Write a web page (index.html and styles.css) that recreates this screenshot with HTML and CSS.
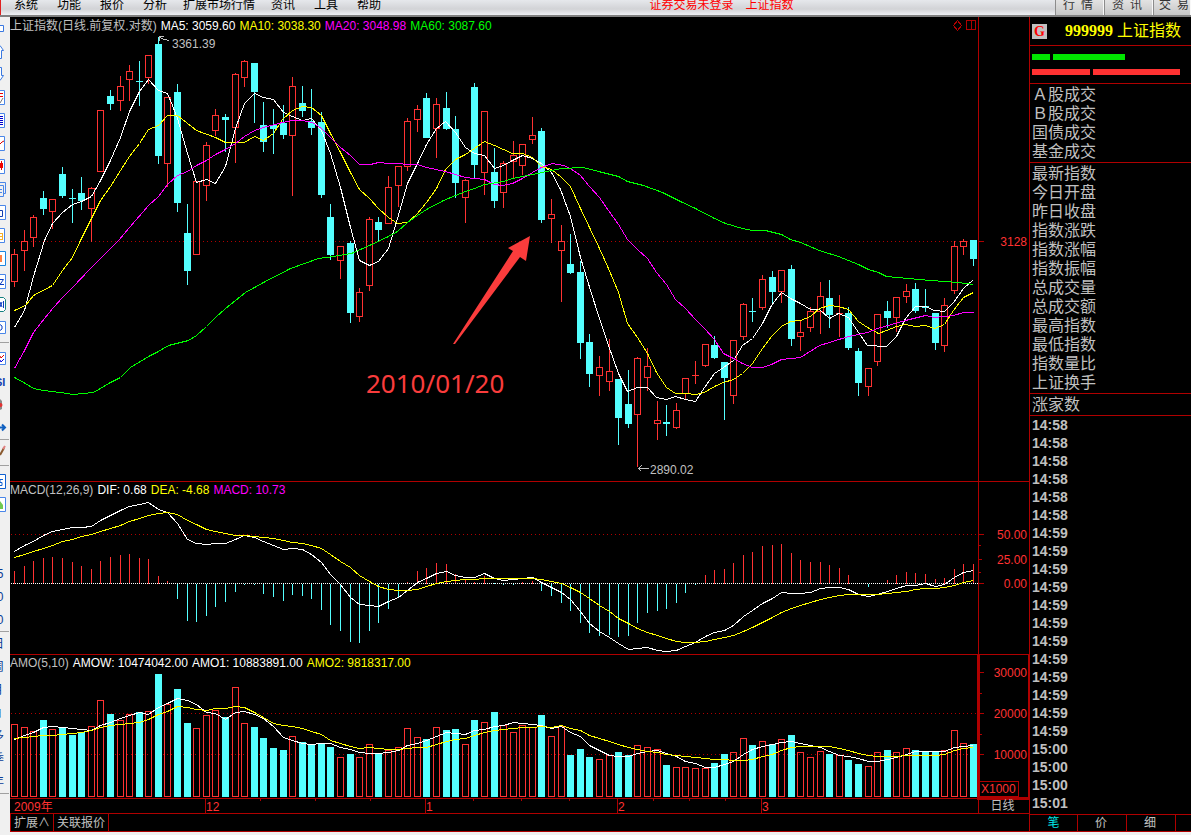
FILE: index.html
```html
<!DOCTYPE html>
<html lang="zh-CN">
<head>
<meta charset="utf-8">
<title>上证指数</title>
<link rel="stylesheet" href="styles.css">
</head>
<body>
<header class="menubar">
  <nav class="menu">
    <button>系统</button><button>功能</button><button>报价</button><button>分析</button><button class="long">扩展市场行情</button><button>资讯</button><button>工具</button><button>帮助</button>
  </nav>
  <div class="status"><span>证券交易未登录</span><span>上证指数</span></div>
  <nav class="modes"><button>行&ensp;情</button><button>资&ensp;讯</button><button>交&ensp;易</button></nav>
</header>
<main class="workspace">
  <nav class="tools" id="tools" aria-label="工具栏"></nav>
  <section class="chart">
    <div class="pane">
      <svg id="price" class="plot" viewBox="10 17 968 464" preserveAspectRatio="none"></svg>
      <p class="legend main"><span>上证指数(日线.前复权.对数)</span><span class="w">MA5: 3059.60</span><span class="y">MA10: 3038.30</span><span class="m">MA20: 3048.98</span><span class="g">MA60: 3087.60</span></p>
    </div>
    <div class="scale" id="scale-price"></div>
    <div class="pane">
      <svg id="macd" class="plot" viewBox="10 482 968 172" preserveAspectRatio="none"></svg>
      <p class="legend"><span>MACD(12,26,9)</span><span class="w">DIF: 0.68</span><span class="y">DEA: -4.68</span><span class="m">MACD: 10.73</span></p>
    </div>
    <div class="scale" id="scale-macd"></div>
    <div class="pane">
      <svg id="amo" class="plot" viewBox="10 655 968 143" preserveAspectRatio="none"></svg>
      <p class="legend"><span>AMO(5,10)</span><span class="w">AMOW: 10474042.00</span><span class="w">AMO1: 10883891.00</span><span class="y">AMO2: 9818317.00</span></p>
    </div>
    <div class="scale active" id="scale-amo"><span class="unit">X1000</span></div>
    <div class="pane dates"><svg id="dates" class="plot" viewBox="10 799 968 14" preserveAspectRatio="none"></svg></div>
    <div class="scale period">日线</div>
    <div class="subtabs"><button>扩展∧</button><button>关联报价</button></div>
  </section>
  <aside class="quote">
    <h1 class="symbol"><span class="badge">G</span><span class="code">999999</span><span>上证指数</span></h1>
    <div class="strength">
      <div class="bars up"><i style="width:18px"></i><i style="width:72px"></i></div>
      <div class="bars down"><i style="width:58px"></i><i style="width:87px"></i></div>
    </div>
    <ul class="fields"><li>Ａ股成交</li><li>Ｂ股成交</li><li>国债成交</li><li>基金成交</li></ul>
    <ul class="fields"><li>最新指数</li><li>今日开盘</li><li>昨日收盘</li><li>指数涨跌</li><li>指数涨幅</li><li>指数振幅</li><li>总成交量</li><li>总成交额</li><li>最高指数</li><li>最低指数</li><li>指数量比</li><li>上证换手</li></ul>
    <ul class="fields"><li>涨家数</li></ul>
    <ol class="ticks"><li>14:58</li><li>14:58</li><li>14:58</li><li>14:58</li><li>14:58</li><li>14:58</li><li>14:59</li><li>14:59</li><li>14:59</li><li>14:59</li><li>14:59</li><li>14:59</li><li>14:59</li><li>14:59</li><li>14:59</li><li>14:59</li><li>14:59</li><li>14:59</li><li>15:00</li><li>15:00</li><li>15:00</li><li>15:01</li></ol>
    <div class="tabs"><button class="on">笔</button><button>价</button><button>细</button></div>
  </aside>
</main>
<footer class="edge"></footer>
<script src="chart.js"></script>
</body>
</html>
```
FILE: styles.css
```css
* { box-sizing: border-box; }
:root {
  --line: #b00000;
  --red: #ff3232;
  --cyan: #54ffff;
  --grey: #c0c0c0;
}
body {
  margin: 0;
  height: 100vh;
  display: flex;
  flex-direction: column;
  overflow: hidden;
  background: #000;
  color: var(--grey);
  font: 12px/14px "Liberation Sans", "Noto Sans CJK SC", sans-serif;
}
button {
  margin: 0;
  padding: 0;
  border: 0;
  background: none;
  color: inherit;
  font: inherit;
}
ul, ol, p, h1 { margin: 0; padding: 0; list-style: none; }

.menubar {
  flex: none;
  height: 17px;
  display: grid;
  grid-template-columns: 1fr auto 1fr;
  overflow: hidden;
  background: linear-gradient(#e6e8ec, #d2d3d6 60%, #eef0f4);
  border-bottom: 2px solid #808080;
  color: #000;
  line-height: 10px;
}
.menu {
  display: flex;
  align-items: flex-start;
  gap: 19px;
  padding-left: 13px;
  border-left: 1px solid #e02020;
  white-space: nowrap;
}
.menu .long { margin: 0 -3px; }
.status { display: flex; gap: 12px; color: #f00; padding-left: 252px; }
.modes { display: flex; justify-content: flex-end; overflow: hidden; min-width: 136px; }
.modes button {
  flex: none;
  width: 49px;
  height: 15px;
  padding: 0 3px 5px 0;
  background: linear-gradient(#e2e2e2, #c6c6c6);
  border-left: 1px solid #8c8c8c;
  border-right: 1px solid #f8f8f8;
  color: #333;
}
.modes button:last-child { width: 38px; padding: 0 0 5px 4px; white-space: nowrap; }

.workspace { flex: 1; min-height: 0; display: flex; }
.tools {
  flex: none;
  width: 10px;
  overflow: hidden;
  display: flex;
  flex-direction: column;
  background: #f0f0f0;
}
.tools button { flex: none; height: 23px; width: 10px; text-align: left; }
.tools svg { display: block; width: 10px; height: 23px; }
.tools hr { flex: none; width: 9px; margin: 0; border: 0; border-top: 1px solid #a0a0a0; }
.tools .wide { margin: 3px 0 4px; }
.tools .tight { margin: 2px 0 4px; }
.tools .gap { flex: none; height: 46px; }

.chart {
  flex: 1;
  min-width: 0;
  display: grid;
  grid-template-columns: 1fr 51px;
  grid-template-rows: 465fr 173fr 144fr 15px 18px;
}
.pane, .scale { position: relative; min-height: 0; min-width: 0; border-bottom: 1px solid var(--line); }
.scale { border-left: 1px solid var(--line); color: var(--red); }
.plot { position: absolute; inset: 0; width: 100%; height: 100%; shape-rendering: crispEdges; fill: none; }
.plot text { fill: var(--grey); font-size: 12px; }
.plot .note { fill: #fa3c3c; font: 26px "Noto Sans", sans-serif; }
.plot .month { fill: var(--red); }
.legend { position: relative; display: flex; gap: 4px; padding-top: 1px; white-space: nowrap; }
.legend.main { padding-top: 2px; }
.w { color: #fff; }
.y { color: #ff0; }
.m { color: #f0f; }
.g { color: #0f0; }
.value { position: absolute; right: 2px; line-height: 16px; transform: translateY(-50%); }
.mark { position: absolute; left: 0; height: 1px; background: var(--line); }
.active { outline: 1px solid var(--line); }
.active::after { content: ""; position: absolute; inset: 0; border: 1px solid var(--line); border-width: 0 1px 1px; }
.unit { position: absolute; left: 0; bottom: 1px; padding: 0 2px 0 1px; border: 1px solid var(--line); line-height: 14px; }
.period { padding-right: 3px; color: var(--grey); text-align: center; }
.subtabs { grid-column: 1 / -1; display: flex; border-bottom: 1px solid var(--line); border-left: 1px solid var(--line); }
.subtabs button { padding: 0 3px; border-right: 1px solid var(--line); }

.quote {
  flex: none;
  width: 162px;
  display: flex;
  flex-direction: column;
  border-left: 1px solid var(--line);
  font-size: 16px;
}
.symbol {
  flex: none;
  height: 29px;
  display: flex;
  align-items: center;
  padding-left: 2px;
  border-bottom: 1px solid var(--line);
  color: #ff0;
  font: 16px/18px "Liberation Sans", "Noto Sans CJK SC", sans-serif;
  white-space: nowrap;
}
.badge { width: 15px; margin-right: 18px; background: var(--grey); color: #f00; font: bold 14px/15px "Liberation Serif", serif; text-align: center; }
.code { margin-right: 4px; font: bold 16px/18px "Liberation Serif", serif; }
.strength { flex: none; display: grid; gap: 9px; padding: 8px 2px; border-bottom: 1px solid var(--line); }
.bars { display: flex; gap: 3px; height: 6px; }
.up i { background: #00e600; }
.down i { background: var(--red); }
.fields { flex: none; padding: 1px 2px; border-bottom: 1px solid var(--line); line-height: 19px; }
.ticks { flex: 1; min-height: 0; overflow: hidden; padding-left: 2px; font-size: 14px; font-weight: bold; line-height: 18px; }
.tabs { flex: none; height: 18px; display: flex; border: solid var(--line); border-width: 1px 0; font-size: 12px; }
.tabs button { width: 49px; padding-right: 2px; border-right: 1px solid var(--line); }
.tabs .on { width: 48px; padding-right: 0; color: #00e6e6; }
.edge { flex: none; height: 3px; background: #f0f0f0; }
```
FILE: chart.js
```js
// Each bar: high, body top, body bottom, low, 1 = rising / 0 = falling
const bars = [
[249,254,282,287,1],[230,241,251,271,1],[215,217,238,247,1],[191,198,209,215,0],[199,199,212,229,1],
[167,174,196,198,0],[189,198,199,223,0],[177,193,201,210,0],[187,188,209,242,1],[110,110,172,172,1],
[90,96,104,110,0],[76,86,101,111,1],[65,71,80,101,1],[61,81,82,106,0],[55,55,78,84,1],
[37,44,156,164,0],[97,97,164,187,1],[84,92,203,212,0],[204,233,271,285,0],[181,181,255,255,1],
[142,145,186,201,1],[109,115,131,136,1],[114,117,120,152,0],[73,74,128,163,1],[60,61,78,87,1],
[63,63,92,123,0],[102,125,142,152,0],[109,125,129,154,0],[105,123,135,139,0],[77,86,136,196,1],
[86,103,111,117,0],[89,121,128,135,0],[112,122,195,198,0],[204,217,255,260,0],[246,246,261,279,1],
[241,243,313,323,0],[288,292,317,322,1],[217,219,286,291,1],[217,222,230,241,0],[176,187,224,224,1],
[166,166,186,207,1],[118,121,167,171,1],[105,109,120,132,1],[93,98,138,138,0],[98,104,129,158,1],
[92,108,129,130,0],[116,129,183,198,0],[179,180,198,223,1],[83,87,165,179,0],[111,111,173,195,1],
[148,172,201,208,0],[161,163,193,208,1],[141,155,162,179,1],[144,144,166,175,1],[117,135,140,144,1],
[128,131,220,223,0],[199,214,219,243,1],[225,241,251,302,1],[234,264,273,274,0],[261,272,343,359,0],
[334,342,374,387,0],[356,367,376,396,1],[339,371,382,391,1],[379,379,418,445,0],[370,404,424,428,0],
[357,358,415,467,1],[348,366,378,391,1],[401,420,424,440,1],[405,422,424,436,0],[403,410,428,429,1],
[378,378,394,400,1],[361,375,376,384,1],[344,344,366,367,1],[336,345,358,359,0],[362,362,378,420,0],
[340,340,396,404,1],[303,304,337,340,1],[298,311,312,322,0],[275,279,308,310,1],[271,277,292,304,0],
[270,270,292,303,1],[265,269,339,346,0],[321,332,337,351,1],[307,311,328,332,1],[282,296,312,334,1],
[280,298,315,328,0],[295,313,314,337,1],[307,313,348,350,0],[348,351,383,396,0],[368,368,387,396,1],
[314,314,362,366,1],[301,311,318,328,0],[297,297,318,332,1],[284,291,297,303,1],[283,289,311,313,0],
[289,306,308,312,0],[313,313,343,350,0],[298,305,346,352,1],[241,246,291,294,1],[239,241,247,255,1],
[240,240,259,266,0]];
const ma5 = "14,327 24,310 33,276 44,240 52,223 62,212 72,204 81,201 91,196 100,180 110,160 120,137 129,111 139,91 148,79 158,90 167,93 172,105 177,118 187,153 196,182 206,179 215,183 225,166 235,128 244,103 254,93 263,97 273,99 283,112 292,116 302,120 311,118 321,130 330,153 340,187 350,227 359,260 369,265 378,261 388,248 397,218 407,183 417,163 426,144 436,128 445,121 455,132 465,147 474,153 484,155 494,168 503,165 512,160 522,155 532,158 541,163 551,172 560,189 570,216 580,257 590,290 599,318 608,345 618,373 627,391 637,387 647,387 656,397 666,399 675,396 685,399 695,401 704,387 714,373 723,367 733,360 742,345 752,338 762,323 771,305 781,292 790,298 800,303 810,309 819,309 829,318 838,313 848,317 858,332 867,345 886,346 896,336 905,318 915,306 925,306 934,310 944,311 953,302 963,288 973,279";
const ma10 = "14,310 25,305 33,295 52,285 62,270 72,257 80,240 91,218 100,200 110,186 120,170 129,156 139,143 148,129 158,125 167,115 177,115 196,130 215,137 225,142 244,142 254,136 263,140 273,133 282,119 292,110 302,106 311,107 321,115 330,133 340,152 350,172 359,189 369,198 378,208 388,217 397,223 407,222 417,213 426,202 436,188 445,169 455,159 465,154 474,148 484,141 494,145 512,153 522,153 532,157 541,166 551,169 560,176 570,186 580,208 589,227 599,248 608,268 618,292 627,323 637,337 647,353 656,372 666,387 675,393 685,393 695,394 704,392 714,386 723,382 733,379 742,373 752,363 762,348 771,336 781,326 790,321 800,320 810,316 819,308 829,305 838,306 848,309 858,321 867,327 878,333 886,330 896,326 905,324 915,326 925,325 934,328 944,324 953,310 963,297 973,292";
const ma20 = "14,368 24,350 33,332 44,318 53,307 62,297 72,287 90,268 100,258 118,240 129,227 148,205 158,196 167,184 177,175 187,171 196,165 206,160 215,154 225,149 235,143 244,136 254,130 263,127 282,122 292,120 302,120 312,122 321,128 330,137 340,147 350,155 359,164 370,164 378,162 388,163 417,164 426,167 445,171 455,174 465,177 484,179 494,184 502,185 512,183 522,178 532,172 541,167 552,163 563,165 570,168 580,175 589,186 599,197 608,210 618,224 627,239 637,249 647,258 656,272 666,284 675,299 685,308 695,319 704,328 714,339 723,353 733,358 742,363 752,367 762,367 771,364 781,359 800,357 819,345 829,342 848,336 867,332 877,328 905,320 925,315 934,317 953,315 963,312 973,312";
const ma60 = "14,377 25,383 33,388 43,390 60,392 73,394 93,392 110,382 120,377 130,367 148,356 158,351 168,345 188,340 196,335 206,326 215,317 225,308 235,300 245,292 263,282 290,268 307,262 318,258 333,256 351,253 369,245 388,236 397,231 407,222 417,215 426,209 443,200 455,195 465,191 474,188 484,184 503,181 512,178 532,174 551,170 561,168 583,167 598,171 618,176 627,181 643,185 662,192 680,201 695,208 714,218 725,223 742,228 752,230 765,230 781,234 790,239 800,242 819,250 838,256 858,264 868,269 878,272 886,276 930,280 958,282 973,284";
const hist = [571,566,561,558,557,558,562,566,569,561,557,555,554,558,559,576,581,599,621,622,616,607,602,592,585,585,594,597,601,595,596,599,610,625,631,642,643,631,623,609,597,582,571,568,563,564,574,580,582,576,583,585,585,582,581,591,596,603,611,623,633,636,635,637,636,623,613,611,609,603,593,585,575,570,569,563,555,552,546,545,544,553,560,562,562,565,568,575,584,587,583,580,575,572,573,574,579,578,569,564,564];
const dif = [551,545,541,535,531,529,527,527,526,520,515,510,506,504,502,509,512,523,539,543,544,543,543,539,535,537,541,545,549,548,549,554,562,574,584,597,604,605,606,601,597,590,582,578,573,571,575,577,577,573,578,580,579,578,577,582,587,592,599,611,623,631,637,643,649,648,647,650,651,650,646,642,636,632,630,625,616,610,603,598,592,593,593,592,588,587,587,589,594,596,594,591,588,585,585,583,586,584,577,572,570];
const dea = [557,554,551,548,545,541,539,536,534,531,528,525,521,518,515,513,512,514,520,524,529,531,533,535,535,536,537,538,540,542,543,545,548,554,561,567,575,581,586,589,590,590,589,586,583,581,580,579,579,578,578,578,578,578,578,579,581,583,587,592,598,605,611,618,623,628,632,635,638,641,642,642,641,639,637,635,631,627,622,617,612,608,605,602,599,597,595,594,594,594,594,593,592,591,589,588,588,587,585,582,580];
const amo = [724,727,731,720,729,727,735,732,726,700,714,720,714,712,711,674,704,689,723,728,715,710,717,687,723,727,738,748,750,736,742,745,744,747,757,754,757,744,754,750,747,728,737,739,727,730,729,744,720,722,712,725,732,725,727,715,736,726,755,749,757,759,755,752,755,745,747,749,765,767,767,768,768,763,754,752,738,745,741,744,739,735,752,757,751,754,755,760,764,766,752,750,752,748,750,752,752,750,730,743,744];
const amo1 = [739,735,732,727,726,727,728,729,730,725,722,718,715,712,714,707,703,698,700,704,712,713,719,712,711,714,718,726,737,740,743,744,743,743,747,749,752,753,753,752,750,745,743,740,736,732,733,734,730,729,726,725,722,723,724,725,728,726,732,736,745,750,755,756,756,753,751,750,753,756,761,763,767,767,764,761,754,749,746,744,742,741,743,745,747,751,755,756,758,761,761,759,757,754,751,751,751,751,747,746,745];
const amo2 = [738,737,736,735,735,734,733,732,730,727,725,724,723,722,719,714,711,706,707,709,710,708,708,706,707,712,717,723,725,726,728,731,734,740,743,746,748,747,748,749,749,748,747,747,744,741,739,738,735,732,730,729,728,727,727,726,727,725,728,730,735,738,741,744,747,749,751,752,754,755,756,757,758,759,759,760,760,759,756,754,750,747,746,746,746,746,748,750,753,755,756,756,756,755,755,755,755,754,750,748,747];

const RED = "#ff3232", CYAN = "#54ffff", LINE = "#b00000", GREY = "#c0c0c0";
const x = i => Math.round(14.03 + 9.59 * i);
const half = n => Number(n) + 0.5;
const path = (d, stroke, fill = "none") => `<path d="${d}" stroke="${stroke}" fill="${fill}"/>`;
const curve = (points, colour) =>
  `<polyline points="${points.split(" ").map(p => p.split(",").map(half).join(",")).join(" ")}" stroke="${colour}"/>`;
const series = (ys, colour) => curve(ys.map((y, i) => `${x(i)},${y}`).join(" "), colour);
const grid = (y, colour = LINE, dash = "1 3") =>
  `<path d="M11 ${y + 0.5}H978" stroke="${colour}" stroke-dasharray="${dash}"/>`;
const draw = (id, html) => { document.getElementById(id).innerHTML = html; };

let wicks = ["", ""], hollow = "", solid = "", columns = "", blocks = "", sticks = ["", ""];
bars.forEach(([h, t, b, l, up], i) => {
  const c = x(i);
  wicks[up] += `M${c + 0.5} ${h}V${t}M${c + 0.5} ${b}V${l}`;
  if (up) {
    hollow += b - t > 1 ? `M${c - 2.5} ${t + 0.5}h6v${b - t - 1}h-6z` : `M${c - 3} ${t + 0.5}h7`;
    columns += `M${c - 2.5} ${amo[i] + 0.5}h6V796.5h-6z`;
  } else {
    solid += `M${c - 3} ${t}h7V${b}h-7z`;
    blocks += `M${c - 3} ${amo[i]}h7V797h-7z`;
  }
  sticks[hist[i] < 583 ? 1 : 0] += `M${c + 0.5} 583.5V${hist[i]}`;
});

draw("price", grid(241) + path(wicks[0], CYAN) + path(wicks[1], RED) + path(hollow, RED) + path(solid, "none", CYAN) +
  curve(ma5, "#fff") + curve(ma10, "#ff0") + curve(ma20, "#f0f") + curve(ma60, "#0f0") +
  path("M163.5 36.5H159.5V40.5M159.5 37.5L164.5 39.5L169.5 40.5", GREY) + `<text x="172" y="48">3361.39</text>` +
  path("M648.5 468.5H638.5M641.5 465.5L638.5 468.5L641.5 471.5", GREY) + `<text x="650" y="474">2890.02</text>` +
  path("M957.5 20.5L961.5 25.5L957.5 30.5L953.5 25.5zM966.5 20.5H975.5V29.5H966.5zM971.5 20.5V29.5", LINE) +
  `<path d="M530 236L508 248L513 251L453 344L455 344L520 257L526 261Z" fill="#fa3c3c" shape-rendering="auto"/>` +
  `<text class="note" x="366" y="393">2010/01/20</text>`);

draw("macd", grid(534) + path(sticks[0], CYAN) + path(sticks[1], RED) + grid(583, "#fff", "1 1") +
  series(dif, "#fff") + series(dea, "#ff0"));

draw("amo", grid(713) + grid(754) + path(columns, RED) + path(blocks, "none", CYAN) +
  series(amo1, "#fff") + series(amo2, "#ff0"));

const months = [[205, "12"], [425, "1"], [617, "2"], [761, "3"]];
draw("dates", `<text class="month" x="14" y="811">2009年</text>` +
  months.map(([c, s]) => path(`M${c + 0.5} 799V813`, LINE) + `<text class="month" x="${c + 1}" y="811">${s}</text>`).join("") +
  path([260, 315, 370, 473, 521, 569, 653, 689, 725].map(c => `M${c + 0.5} 799v2`).join(""), LINE));

// Axis marks: y, tick length, label
const axis = (id, top, height, marks) => {
  const at = y => ((y - top) / height * 100).toFixed(2) + "%";
  document.getElementById(id).insertAdjacentHTML("beforeend", marks.map(([y, w, s]) =>
    `<i class="mark" style="top:${at(y)};width:${w}px"></i>` +
    (s ? `<span class="value" style="top:${at(y + 1)}">${s}</span>` : "")).join(""));
};
axis("scale-price", 17, 464, [[241, 5, "3128"]]);
axis("scale-macd", 482, 172, [[534, 5, "50.00"], [545, 2], [559, 3, "25.00"], [572, 2], [583, 5, "0.00"]]);
axis("scale-amo", 655, 143, [[672, 5, "30000"], [693, 3], [713, 5, "20000"], [734, 3], [754, 5, "10000"]]);

// Toolbar glyphs, each in a 10 x 23 box
const frame = '<path d="M0 4.5H4.5V18.5H0" fill="#fff" stroke="#4a86e8"/>';
const caption = (s, px, size = 12) => `<text x="${px}" y="16" font-size="${size}" fill="#0a3c96">${s}</text>`;
const tools = [
  '<path d="M0 8.5H3.5V14.5H0" fill="#fff" stroke="#3a78e0"/>',
  '<path d="M0 5.5L3.5 10.5H1.5V18.5H0" fill="#fff" stroke="#3a78e0"/>',
  '<path d="M0 17.5L3.5 12.5H1.5V4.5H0" fill="#fff" stroke="#3a78e0"/>',
  frame + '<path d="M0 7.5H3M0 10.5H3" stroke="#e00"/><path d="M0 17L3 12" stroke="#777"/>',
  frame + '<path d="M0 7.5H3M0 9.5H3M0 11.5H3M0 13.5H3M0 15.5H3" stroke="#00c"/>',
  frame + '<path d="M0 12L2 10L4 9" stroke="#d00"/>',
  frame + '<path d="M1.5 6V15" stroke="#e00"/><path d="M0 8H3V13H0z" fill="#e00"/>',
  '<path d="M0 4.5H5.5V15.5H3" stroke="#4a86e8"/><path d="M0 7.5H3.5V18.5H0M0 11.5H2M0 14.5H2" stroke="#4a86e8"/>',
  '<path d="M0 4.5H5.5V18.5H0" fill="#fff" stroke="#4a86e8"/><path d="M0 9.5H2.5V15.5H0" stroke="#1540b0"/>',
  frame + '<path d="M0 9.5H3M0 12.5H3M0 15.5H3M2.5 9V16" stroke="#f5b02a"/>',
  '<path d="M0 4.5H5.5V18.5H0" fill="#fff" stroke="#1a86e0"/><path d="M0 8H2V15H0z" fill="#ff8040"/>',
  '<path d="M0 4.5H5.5V18.5H0" fill="#fff" stroke="#4a86e8"/><path d="M0 9.5H3.5L0 14.5H4" stroke="#0a3cc0"/>',
  '<path d="M0 4.5H3.5L5.5 6.5V16.5L3.5 18.5H0" fill="#fff" stroke="#158080"/><path d="M0 9L2 14M2 9L0 14M3.5 8V15" stroke="#0a3cc0"/>',
  '<path d="M0 5.5H5.5V17.5H0" fill="#fff" stroke="#4a86e8"/><path d="M0 8.5L2 10V13L0 14.5" stroke="#0a3cc0"/>',
  "wide",
  '<path d="M0 5.5H5.5V17.5H0" fill="#fff" stroke="#4a86e8"/><path d="M0 9L1 11L4 8" stroke="#d00"/><path d="M0 13L1 15L4 12" stroke="#00d"/>',
  '<text x="-13" y="16" font-size="11" font-weight="bold" fill="#1540b0">RSI</text>',
  '<path d="M0 6L2 8V16L0 17z" fill="#888"/><circle cx="0.5" cy="12" r="2" fill="#e03030"/>',
  '<path d="M0 11.5H5M2 8.5L5 11.5L2 14.5" stroke="#1060c0" stroke-width="2"/>',
  "line",
  '<path d="M0 15L4 8" stroke="#8a5a30" stroke-width="2"/><path d="M3 9L5 6" stroke="#e08080" stroke-width="2"/>',
  "tight",
  '<path d="M0 4.5H5.5V18.5H0" fill="#fff" stroke="#1060d0"/><path d="M3 9.5H0V12.5H2V15.5H0" stroke="#1060d0"/>',
  '<path d="M0 4.5H5.5V18.5H0" fill="#fff" stroke="#4a86e8"/><path d="M0 8L3 12V16H0z" fill="#70c850"/>',
  "gap",
  caption("15", -10), caption("30", -10), caption("60", -10),
  "line",
  caption("日", -8), caption("周", -8), caption("月", -9), caption("日", -8, 10), caption("多", -8), caption("季", -8), caption("年", -8),
  "line"
];
const dividers = { wide: '<hr class="wide">', line: "<hr>", tight: '<hr class="tight">', gap: '<span class="gap"></span>' };
draw("tools", tools.map(t => dividers[t] || `<button type="button"><svg fill="none" viewBox="0 0 10 23">${t}</svg></button>`).join(""));
```
